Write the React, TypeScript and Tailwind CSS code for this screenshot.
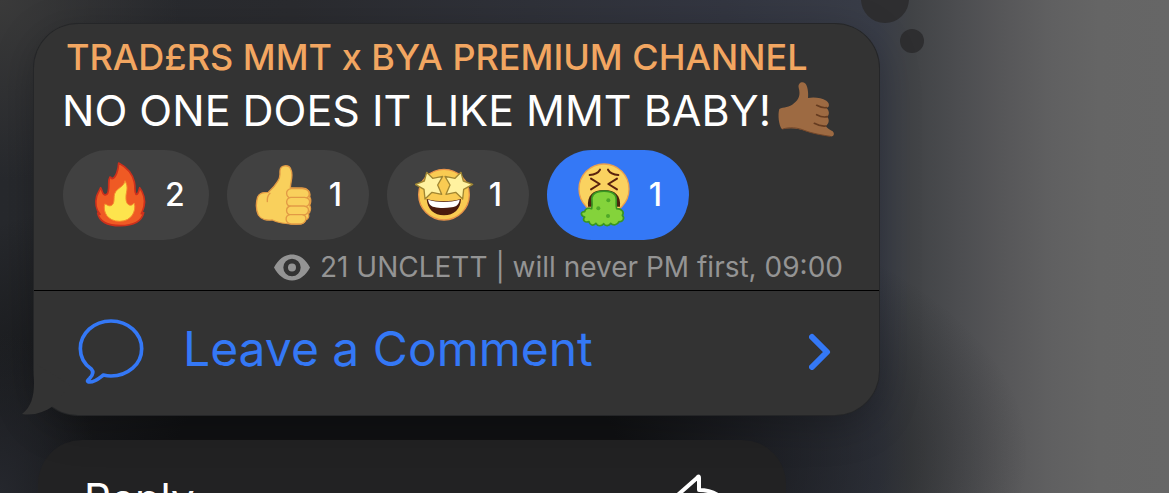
import type { ReactNode } from 'react';
import clsx from 'clsx';

const HandEmoji = () => (
  <svg viewBox="0 0 174 168" className="ml-1.5 mb-1 w-[58px] h-[56px] shrink-0" role="img" aria-label="call me hand">
    <path
      d="M65 20C62 6 76 0 84 7C92 14 95 36 93 51C110 47 133 50 148 59C158 65 159 80 148 80C156 87 159 99 151 107C158 116 156 128 146 135C151 142 157 146 164 149C174 153 173 168 160 166C134 162 104 157 84 149C62 141 36 139 15 145C5 133 2 100 7 84C20 78 37 80 51 67C66 54 71 42 65 20Z"
      fill="#9d6a42"
    />
    <path
      d="M148 80C137 82 127 77 119 73M151 107C140 110 128 106 119 101M146 135C135 136 121 132 112 127"
      fill="none"
      stroke="#653b20"
      strokeWidth="5"
      strokeLinecap="round"
    />
    <path d="M17 144C38 138 61 139 84 149C105 157 134 162 160 166" fill="none" stroke="#74472a" strokeWidth="3" />
  </svg>
);

const FireEmoji = () => (
  <svg viewBox="0 0 180 198" className="w-[60px] h-[66px]" role="img" aria-label="fire">
    <path
      d="M83 3C104 14 124 34 130 60C134 77 129 88 135 97C143 98 143 86 146 77C157 91 164 114 159 133C157 142 154 149 151 155L158 152C152 179 125 191 88 191C51 191 25 179 20 153L27 157C15 143 12 121 17 103C20 93 26 85 29 77C34 85 33 95 40 98C51 101 52 90 53 78C54 65 51 55 57 45C61 45 60 49 63 50C75 47 82 24 83 3Z"
      fill="#ef5a24"
      stroke="#cc301c"
      strokeWidth="5"
      strokeLinejoin="round"
    />
    <path
      d="M102 56C113 76 106 88 105 101C104 117 107 128 118 130C125 130 127 124 130 124C136 145 123 178 86 178C50 178 35 150 41 126C47 126 51 134 60 131C74 125 66 105 72 93C79 77 99 75 102 56Z"
      fill="#fde44d"
      stroke="#f58a2c"
      strokeWidth="3"
    />
  </svg>
);

const ThumbEmoji = () => (
  <svg viewBox="0 0 180 198" className="w-[60px] h-[66px]" role="img" aria-label="thumbs up">
    <g fill="#f9d05c" stroke="#e29a45" strokeWidth="4" strokeLinejoin="round" strokeLinecap="round">
      <path d="M75 26C76 7 103 7 108 23C116 42 106 62 106 77L141 78C158 79 168 89 164 104C168 112 168 122 164 130C169 139 166 150 160 155C164 165 158 173 151 174C150 184 138 187 120 186C96 186 72 184 52 174C35 176 17 171 10 159C3 143 3 121 8 105C13 92 25 91 40 91C50 82 59 73 68 58C78 43 74 40 75 26Z" />
      <path d="M108 80H143C168 83 167 104 152 109H108C92 105 89 84 108 80Z" />
      <path d="M107 106H149C169 108 168 130 151 134H107C90 129 92 109 107 106Z" />
      <path d="M106 132H147C167 135 163 156 146 159H106C91 155 91 136 106 132Z" />
      <path d="M105 158H141C158 160 156 181 138 186H108C89 182 89 161 105 158Z" />
      <path d="M45 94C38 101 36 109 37 119" fill="none" />
    </g>
  </svg>
);

const StarEmoji = () => (
  <svg viewBox="0 0 180 198" className="w-[60px] h-[66px]" role="img" aria-label="star eyes">
    <circle cx="87" cy="98" r="76" fill="#f9cb52" stroke="#e99449" strokeWidth="4" />
    <path d="M35 111C68 120 104 120 138 111C137 141 117 160 87 160C57 160 37 141 35 111Z" fill="#4b1b0d" />
    <path d="M39 113C69 122 103 122 134 113C132 127 125 134 110 136C91 139 72 139 58 135C45 132 41 124 39 113Z" fill="#fff" />
    <g fill="#fff2a0" stroke="#a08632" strokeWidth="4" strokeLinejoin="round">
      <path d="M35 31L53 49L83 43L68 69L80 97L51 91L30 111L27 82L1 67L28 57Z" />
      <path d="M138 31L120 49L90 43L105 69L93 97L122 91L143 111L146 82L173 67L145 57Z" />
    </g>
  </svg>
);

const SickEmoji = () => (
  <svg viewBox="0 0 180 198" className="w-[60px] h-[66px]" role="img" aria-label="vomiting">
    <circle cx="87" cy="81" r="75" fill="#fad260" stroke="#eda14c" strokeWidth="4" />
    <g fill="none" stroke="#59220e" strokeWidth="6" strokeLinecap="round" strokeLinejoin="round">
      <path d="M44 39C58 38 70 32 75 23M130 39C116 38 104 32 99 23" />
      <path d="M48 50L74 66L48 82M126 50L100 66L126 82" />
    </g>
    <path d="M39 134C36 101 53 84 87 84C121 84 138 101 135 134Z" fill="#4b240d" />
    <path
      d="M50 140C55 119 45 109 55 98C68 84 106 84 119 98C129 109 120 123 125 140C140 140 149 150 142 160C151 169 142 181 132 179C127 190 114 191 107 184C102 193 91 193 86 185C79 194 68 193 63 184C56 193 44 190 42 179C29 183 21 174 29 165C15 160 17 148 29 149C30 140 40 136 50 140Z"
      fill="#84d33b"
      stroke="#399522"
      strokeWidth="5"
      strokeLinejoin="round"
    />
    <g fill="#4fa827">
      <circle cx="100" cy="115" r="6" />
      <circle cx="70" cy="139" r="6" />
      <circle cx="99" cy="162" r="6" />
    </g>
  </svg>
);

type Reaction = { name: string; icon: ReactNode; count: number; active?: boolean };

const reactions: Reaction[] = [
  { name: 'fire', icon: <FireEmoji />, count: 2 },
  { name: 'thumb', icon: <ThumbEmoji />, count: 1 },
  { name: 'star', icon: <StarEmoji />, count: 1 },
  { name: 'sick', icon: <SickEmoji />, count: 1, active: true },
];

const ReactionPill = ({ icon, count, active }: Omit<Reaction, 'name'>) => (
  <button
    type="button"
    aria-pressed={!!active}
    className={clsx(
      'h-[90px] min-w-[142px] rounded-full flex items-center gap-3.5 pl-7 pr-6 text-[32px] font-medium text-white',
      active ? 'bg-[#3478f6]' : 'bg-[#414141]',
    )}
  >
    {icon}
    <span>{count}</span>
  </button>
);

const Message = () => (
  <article className="relative w-full max-w-[845px] rounded-[44px] bg-[#333333] shadow-[0_0_0_1px_#252628,0_10px_40px_rgba(0,0,0,0.25)]">
    {/* bubble tail */}
    <svg viewBox="0 0 60 60" className="absolute bottom-0 -left-3 w-[60px] h-[60px]" aria-hidden="true">
      <path d="M12 8V28C12 42 9 52 0 59C12 61 23 57 31 51L48 30Z" fill="#333333" />
    </svg>

    <div className="pl-7 pr-9 pt-3.5">
      <h1 className="pl-1 text-[36px] leading-[38px] font-medium text-[#f2a661] whitespace-nowrap">
        TRAD£RS MMT x BYA PREMIUM CHANNEL
      </h1>
      <div className="flex items-center h-[70px]">
        <p className="pb-0.5 text-[43px] leading-none text-white whitespace-nowrap">NO ONE DOES IT LIKE MMT BABY!</p>
        <HandEmoji />
      </div>
      <div className="flex gap-[18px] pt-1 pl-px">
        {reactions.map(({ name, ...reaction }) => (
          <ReactionPill key={name} {...reaction} />
        ))}
      </div>
      <div className="flex items-center justify-end gap-2.5 h-[50px] pb-1 pt-2 text-[28px] text-[#949494] whitespace-nowrap">
        <svg viewBox="0 0 108 80" className="w-9 h-[27px] shrink-0" aria-hidden="true">
          <path
            fillRule="evenodd"
            fill="currentColor"
            d="M0 40C12 17 31 1 54 1C77 1 96 17 108 40C96 63 77 79 54 79C31 79 12 63 0 40ZM54 14A26 26 0 1 0 54 66A26 26 0 1 0 54 14ZM54 28A12 12 0 1 1 54 52A12 12 0 1 1 54 28Z"
          />
        </svg>
        <span>21 UNCLETT | will never PM first, 09:00</span>
      </div>
    </div>

    <button
      type="button"
      className="relative w-full h-[125px] border-t border-black flex items-center pb-1 pl-[43px] pr-12 text-[#3478f6] text-left"
    >
      <svg viewBox="0 0 204 204" className="w-[68px] h-[68px] shrink-0" aria-hidden="true">
        <path
          d="M43 156C20 140 10 118 10 95C10 50 50 12 102 12C154 12 194 50 194 95C194 142 152 177 102 177C94 177 87 176 79 174C66 184 56 195 38 195C28 195 31 190 38 184C48 174 50 164 43 156Z"
          fill="none"
          stroke="currentColor"
          strokeWidth="11"
          strokeLinejoin="round"
        />
      </svg>
      <span className="flex-1 pl-[38px] pb-1 text-[48px] leading-none whitespace-nowrap">Leave a Comment</span>
      <svg viewBox="0 0 22 38" className="w-[22px] h-[38px]" aria-hidden="true">
        <path
          d="M3 5L18 20L3 35"
          fill="none"
          stroke="currentColor"
          strokeWidth="6"
          strokeLinecap="round"
          strokeLinejoin="round"
        />
      </svg>
    </button>
  </article>
);

const ContextMenu = () => (
  <div className="w-full max-w-[748px] ml-1 mt-[25px] rounded-[44px] bg-[#222223]">
    <button type="button" className="w-full h-[120px] flex items-center justify-between px-[46px] text-white">
      <span className="pb-1 text-[42px]">Reply</span>
      <svg viewBox="0 0 74 60" className="w-[74px] h-[60px]" aria-hidden="true">
        <path
          d="M31 8Q33 5 33 8V20C50 20 66 30 70 58C60 46 50 42 33 42V55Q33 59 30 56L6 34Q4 32 6 30Z"
          fill="none"
          stroke="currentColor"
          strokeWidth="4"
          strokeLinejoin="round"
        />
      </svg>
    </button>
  </div>
);

export default function App() {
  return (
    <main className="relative h-screen overflow-hidden font-['Inter',sans-serif] bg-[radial-gradient(ellipse_180px_180px_at_0_0,#3a3a3a,transparent),radial-gradient(ellipse_100px_160px_at_0_100%,#25272d,transparent),radial-gradient(ellipse_54%_60%_at_34%_92%,#101113_35%,transparent),linear-gradient(90deg,#27292d_0%,#2a2b2f_25%,#333641_62%,#393d48_75%,#414346_78%,#4c4d50_82%,#575759_86%,#606061_90%,#656565_94%,#666666_100%)]">
      <span className="absolute -top-[25px] left-[861px] size-12 rounded-full bg-[#2e2e30]" />
      <span className="absolute top-[29px] left-[900px] size-6 rounded-full bg-[#2e2e30]" />
      <div className="pt-6 pl-[34px] pr-6">
        <Message />
        <ContextMenu />
      </div>
    </main>
  );
}
